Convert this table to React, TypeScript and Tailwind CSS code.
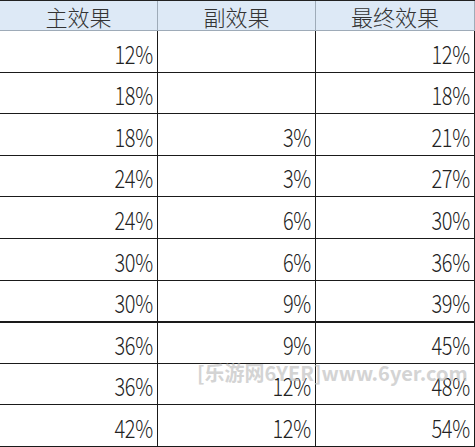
const rows = [
  { a: "12%", b: "", c: "12%", h: "h-[42px]" },
  { a: "18%", b: "", c: "18%", h: "h-[41px]" },
  { a: "18%", b: "3%", c: "21%", h: "h-[42px]" },
  { a: "24%", b: "3%", c: "27%", h: "h-[41px]" },
  { a: "24%", b: "6%", c: "30%", h: "h-[42px]" },
  { a: "30%", b: "6%", c: "36%", h: "h-[42px]" },
  { a: "30%", b: "9%", c: "39%", h: "h-[42px] border-b-2" },
  { a: "36%", b: "9%", c: "45%", h: "h-[41px]" },
  { a: "36%", b: "12%", c: "48%", h: "h-[41px]" },
  { a: "42%", b: "12%", c: "54%", h: "h-[42px]" },
];

const font = { fontFamily: '"Noto Sans CJK SC", "Noto Sans", sans-serif' };

export default function App() {
  return (
    <div className="relative w-[475px] h-[447px] bg-white overflow-hidden" style={font}>
      <div className="border-t border-[#222]">
        {/* Header */}
        <div className="grid grid-cols-[158px_158px_159px] h-[30px] bg-[#dde9f6] text-[#333] text-[22px] font-light">
          {["主效果", "副效果", "最终效果"].map((t) => (
            <div key={t} className="flex items-center justify-center border-r border-b border-[#9eabb8] leading-[28px]">
              {t}
            </div>
          ))}
        </div>

        {/* Rows */}
        {rows.map((r, i) => (
          <div key={i} className={`grid grid-cols-[158px_158px_159px] border-b border-[#1a1a1a] ${r.h}`}>
            {[r.a, r.b, r.c].map((v, j) => (
              <div key={j} className="flex items-end justify-end pr-[4px] pb-[6px] border-r border-[#1a1a1a] text-[#222] text-[25px] font-light leading-none">
                <span className="inline-block origin-right scale-x-[0.8] tracking-[-0.5px]">{v}</span>
              </div>
            ))}
          </div>
        ))}
      </div>

      {/* Watermark */}
      <div className="absolute left-[197px] top-[363px] text-[20px] font-bold text-[#c2c2c2] opacity-70 whitespace-nowrap leading-none">
        [乐游网6YER]www.6yer.com
      </div>
    </div>
  );
}
